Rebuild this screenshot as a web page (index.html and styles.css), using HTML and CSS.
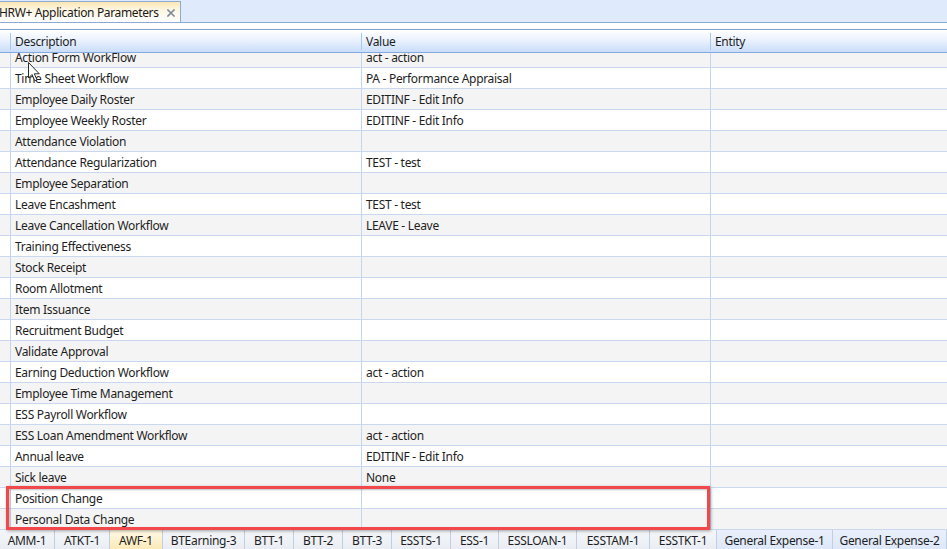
FILE: index.html
```html
<!DOCTYPE html>
<html>
<head>
<meta charset="utf-8">
<link rel="stylesheet" href="styles.css">
</head>
<body>
<div class="app">
  <div class="tabstrip">
    <div class="doctab"><span class="doctab-title">HRW+ Application Parameters</span><svg class="doctab-close" width="8" height="8" viewBox="0 0 8 8"><path d="M1 1 L7 7 M7 1 L1 7" stroke="#7e8a9a" stroke-width="1.6" stroke-linecap="square"/></svg></div>
  </div>
  <div class="gap"></div>
  <div class="grid">
    <div class="head">
      <div class="hcell gut"></div>
      <div class="hcell desc"><span class="sep"></span>Description</div>
      <div class="hcell val"><span class="sep"></span>Value</div>
      <div class="hcell ent"><span class="sep"></span>Entity</div>
    </div>
    <div class="body">
      <div class="rows">
        <div class="row alt"><div class="cell gut"></div><div class="cell desc">Action Form WorkFlow</div><div class="cell val">act - action</div><div class="cell ent"></div></div>
        <div class="row"><div class="cell gut"></div><div class="cell desc">Time Sheet Workflow</div><div class="cell val">PA - Performance Appraisal</div><div class="cell ent"></div></div>
        <div class="row alt"><div class="cell gut"></div><div class="cell desc">Employee Daily Roster</div><div class="cell val">EDITINF - Edit Info</div><div class="cell ent"></div></div>
        <div class="row"><div class="cell gut"></div><div class="cell desc">Employee Weekly Roster</div><div class="cell val">EDITINF - Edit Info</div><div class="cell ent"></div></div>
        <div class="row alt"><div class="cell gut"></div><div class="cell desc">Attendance Violation</div><div class="cell val"></div><div class="cell ent"></div></div>
        <div class="row"><div class="cell gut"></div><div class="cell desc">Attendance Regularization</div><div class="cell val">TEST - test</div><div class="cell ent"></div></div>
        <div class="row alt"><div class="cell gut"></div><div class="cell desc">Employee Separation</div><div class="cell val"></div><div class="cell ent"></div></div>
        <div class="row"><div class="cell gut"></div><div class="cell desc">Leave Encashment</div><div class="cell val">TEST - test</div><div class="cell ent"></div></div>
        <div class="row alt"><div class="cell gut"></div><div class="cell desc">Leave Cancellation Workflow</div><div class="cell val">LEAVE - Leave</div><div class="cell ent"></div></div>
        <div class="row"><div class="cell gut"></div><div class="cell desc">Training Effectiveness</div><div class="cell val"></div><div class="cell ent"></div></div>
        <div class="row alt"><div class="cell gut"></div><div class="cell desc">Stock Receipt</div><div class="cell val"></div><div class="cell ent"></div></div>
        <div class="row"><div class="cell gut"></div><div class="cell desc">Room Allotment</div><div class="cell val"></div><div class="cell ent"></div></div>
        <div class="row alt"><div class="cell gut"></div><div class="cell desc">Item Issuance</div><div class="cell val"></div><div class="cell ent"></div></div>
        <div class="row"><div class="cell gut"></div><div class="cell desc">Recruitment Budget</div><div class="cell val"></div><div class="cell ent"></div></div>
        <div class="row alt"><div class="cell gut"></div><div class="cell desc">Validate Approval</div><div class="cell val"></div><div class="cell ent"></div></div>
        <div class="row"><div class="cell gut"></div><div class="cell desc">Earning Deduction Workflow</div><div class="cell val">act - action</div><div class="cell ent"></div></div>
        <div class="row alt"><div class="cell gut"></div><div class="cell desc">Employee Time Management</div><div class="cell val"></div><div class="cell ent"></div></div>
        <div class="row"><div class="cell gut"></div><div class="cell desc">ESS Payroll Workflow</div><div class="cell val"></div><div class="cell ent"></div></div>
        <div class="row alt"><div class="cell gut"></div><div class="cell desc">ESS Loan Amendment Workflow</div><div class="cell val">act - action</div><div class="cell ent"></div></div>
        <div class="row"><div class="cell gut"></div><div class="cell desc">Annual leave</div><div class="cell val">EDITINF - Edit Info</div><div class="cell ent"></div></div>
        <div class="row alt"><div class="cell gut"></div><div class="cell desc">Sick leave</div><div class="cell val">None</div><div class="cell ent"></div></div>
        <div class="row"><div class="cell gut"></div><div class="cell desc">Position Change</div><div class="cell val"></div><div class="cell ent"></div></div>
        <div class="row alt"><div class="cell gut"></div><div class="cell desc">Personal Data Change</div><div class="cell val"></div><div class="cell ent"></div></div>
      </div>
    </div>
  </div>
  <div class="sheettabs">
    <div class="stab">AMM-1</div>
    <div class="stab">ATKT-1</div>
    <div class="stab active">AWF-1</div>
    <div class="stab">BTEarning-3</div>
    <div class="stab">BTT-1</div>
    <div class="stab">BTT-2</div>
    <div class="stab">BTT-3</div>
    <div class="stab">ESSTS-1</div>
    <div class="stab">ESS-1</div>
    <div class="stab">ESSLOAN-1</div>
    <div class="stab">ESSTAM-1</div>
    <div class="stab">ESSTKT-1</div>
    <div class="stab blue">General Expense-1</div>
    <div class="stab blue">General Expense-2</div>
  </div>
  <div class="highlight"></div>
  <svg class="cursor" width="13" height="20" viewBox="0 0 13 20"><path d="M0.5 0.5 L0.5 16 L4 12.5 L6.8 18.8 L9 17.8 L6.3 11.8 L11.3 11.8 Z" fill="#ffffff" stroke="#2a2a2a" stroke-width="1" stroke-linejoin="miter"/></svg>
</div>
</body>
</html>
```
FILE: styles.css
```css
* { box-sizing: border-box; }
html, body { margin: 0; padding: 0; }
body {
  width: 947px;
  height: 549px;
  overflow: hidden;
  background: #ffffff;
  font-family: "Noto Sans", "Open Sans", sans-serif;
  font-size: 12px;
  letter-spacing: -0.3px;
  color: #1e1e1e;
}
.app {
  position: relative;
  width: 947px;
  height: 549px;
  display: flex;
  flex-direction: column;
  overflow: hidden;
}
.tabstrip {
  height: 23px;
  flex: none;
  background: #dfebfc;
  border-bottom: 1px solid #8ea9d2;
  display: flex;
  align-items: flex-end;
}
.doctab {
  width: 188px;
  height: 21px;
  margin-left: -7px;
  padding-left: 5px;
  border: 1px solid #8ea9d2;
  border-bottom: none;
  background: linear-gradient(#fbe7b4 0%, #fdf5df 35%, #ffffff 100%);
  display: flex;
  align-items: center;
  white-space: nowrap;
  line-height: 19px;
  padding-top: 1px;
}
.doctab-title { color: #1a1a1a; font-size: 12px; letter-spacing: -0.35px; }
.doctab-close {
  margin-left: 8px;
  flex: none;
}
.gap { height: 6px; flex: none; background: #ffffff; }
.grid {
  flex: none;
  border-top: 1px solid #7f9fd1;
}
.head {
  height: 23px;
  display: grid;
  grid-template-columns: 10px 351px 349px 1fr;
  background: linear-gradient(#ffffff 0%, #eef4fe 40%, #c9ddf9 100%);
  border-bottom: 1px solid #86aadf;
}
.hcell {
  position: relative;
  line-height: 22px;
  padding-top: 1px;
  padding-left: 5px;
  white-space: nowrap;
}
.hcell.gut { padding: 0; }
.sep {
  position: absolute;
  left: 0;
  top: 3px;
  bottom: 3px;
  width: 1px;
  background: #a9c6ef;
}
.body {
  height: 477px;
  overflow: hidden;
}
.rows { margin-top: -6px; }
.row {
  height: 21px;
  display: grid;
  grid-template-columns: 11px 351px 349px 1fr;
  background: #ffffff;
  border-bottom: 1px solid #c9d8ee;
}
.row.alt { background: #f4f4f4; }
.cell {
  line-height: 20px;
  padding-top: 1px;
  padding-left: 4px;
  white-space: nowrap;
  overflow: hidden;
  border-right: 1px solid #c3d5ef;
}
.cell.gut { padding: 0; }
.cell.ent { border-right: none; }
.sheettabs {
  height: 19px;
  flex: none;
  display: grid;
  grid-template-columns: 55px 55px 53px 82px 49px 49px 49px 59px 48px 78px 73px 67px 116px 114px;
  background: #eef2f7;
}
.stab {
  text-align: center;
  line-height: 19px;
  padding-top: 1px;
  white-space: nowrap;
  border-right: 1px solid #c2cfe1;
  background: linear-gradient(#f4f6f9, #e9edf3);
  color: #1e1e1e;
}
.stab.active { background: linear-gradient(#fff9e6, #fbe8b6); }
.stab.blue { background: linear-gradient(#e9f0fb, #dce7f8); }
.highlight {
  position: absolute;
  left: 6px;
  top: 486px;
  width: 704px;
  height: 44px;
  border: 3px solid #f0484b;
  box-shadow: 1px 1px 3px rgba(0,0,0,0.35), inset 1px 1px 2px rgba(0,0,0,0.25);
}
.cursor {
  position: absolute;
  left: 28px;
  top: 62px;
}
```
